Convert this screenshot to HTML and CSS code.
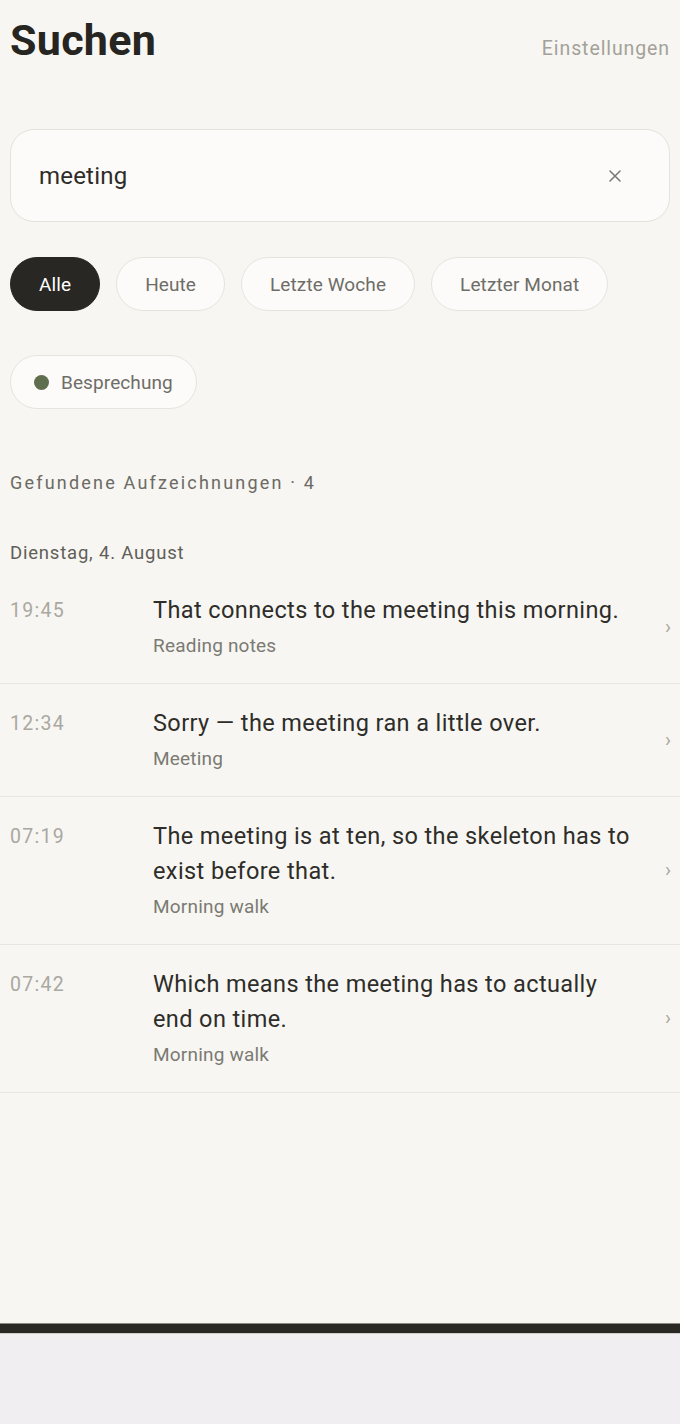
FILE: index.html
```html
<!DOCTYPE html>
<html lang="de">
<head>
<meta charset="utf-8">
<title>Suchen</title>
<link rel="stylesheet" href="styles.css">
</head>
<body>
<div class="app">
  <header class="header">
    <h1 class="title">Suchen</h1>
    <a class="settings">Einstellungen</a>
  </header>

  <div class="search">
    <span class="query">meeting</span>
    <svg class="clear" width="16" height="16" viewBox="0 0 16 16"><path d="M3 3 L13 13 M13 3 L3 13" stroke="#77766f" stroke-width="1.5" fill="none" stroke-linecap="round"/></svg>
  </div>

  <div class="chips">
    <span class="chip active">Alle</span>
    <span class="chip">Heute</span>
    <span class="chip">Letzte Woche</span>
    <span class="chip">Letzter Monat</span>
  </div>

  <div class="chips tags">
    <span class="chip tag"><span class="dot"></span>Besprechung</span>
  </div>

  <div class="count">Gefundene Aufzeichnungen · 4</div>

  <div class="day">Dienstag, 4. August</div>

  <ul class="results">
    <li class="row">
      <span class="time">19:45</span>
      <div class="body">
        <div class="text">That connects to the meeting this morning.</div>
        <div class="source">Reading notes</div>
      </div>
      <span class="chev">›</span>
    </li>
    <li class="row">
      <span class="time">12:34</span>
      <div class="body">
        <div class="text">Sorry — the meeting ran a little over.</div>
        <div class="source">Meeting</div>
      </div>
      <span class="chev">›</span>
    </li>
    <li class="row">
      <span class="time">07:19</span>
      <div class="body">
        <div class="text">The meeting is at ten, so the skeleton has to exist before that.</div>
        <div class="source">Morning walk</div>
      </div>
      <span class="chev">›</span>
    </li>
    <li class="row">
      <span class="time">07:42</span>
      <div class="body">
        <div class="text">Which means the meeting has to actually end on time.</div>
        <div class="source">Morning walk</div>
      </div>
      <span class="chev">›</span>
    </li>
  </ul>
</div>
<div class="bottombar"></div>
<div class="systemarea"></div>
</body>
</html>
```

FILE: styles.css
```css
* { box-sizing: border-box; }
html, body { margin: 0; padding: 0; }
body {
  background: #f0eef1;
  font-family: Roboto, "Liberation Sans", sans-serif;
  color: #2b2a26;
}
.app {
  background: #f7f6f2;
  height: 1323px;
  padding: 0 10px;
}
.header {
  display: flex;
  justify-content: space-between;
  align-items: baseline;
  padding-top: 14px;
}
.title {
  margin: 0;
  font-size: 43px;
  font-weight: 700;
  line-height: 52px;
  color: #262521;
  letter-spacing: 0.3px;
}
.settings {
  font-size: 19.5px;
  letter-spacing: 0.9px;
  color: #a3a199;
}
.search {
  margin-top: 63px;
  height: 93px;
  background: #fcfbf9;
  border: 1.5px solid #e4e2dc;
  border-radius: 24px;
  display: flex;
  align-items: center;
  justify-content: space-between;
  padding: 0 46px 0 28px;
}
.query {
  font-size: 24px;
  letter-spacing: 0.2px;
  color: #2d2c28;
}
.chips {
  display: flex;
  gap: 16px;
  margin-top: 35px;
}
.chip {
  height: 54px;
  display: inline-flex;
  align-items: center;
  padding: 0 28px;
  border-radius: 27px;
  background: #fcfbf9;
  border: 1.5px solid #e6e4de;
  font-size: 19px;
  letter-spacing: 0.1px;
  color: #6e6d67;
}
.chip.active {
  background: #282723;
  border-color: #282723;
  color: #ffffff;
}
.tags { margin-top: 44px; }
.tag { padding: 0 23px 0 23px; }
.dot {
  width: 15px;
  height: 15px;
  border-radius: 50%;
  background: #5f6e4f;
  margin-right: 12px;
}
.count {
  margin-top: 62px;
  font-size: 18px;
  letter-spacing: 2.2px;
  color: #6b6a64;
  line-height: 24px;
}
.day {
  margin-top: 46px;
  font-size: 18.5px;
  letter-spacing: 0.8px;
  color: #5f5e58;
  line-height: 24px;
}
.results {
  list-style: none;
  margin: 0 -10px;
  padding: 0;
  margin-top: 6px;
}
.row {
  display: flex;
  align-items: center;
  padding: 22px 10px 23px 10px;
  border-bottom: 1px solid #e8e6e1;
}
.time {
  align-self: flex-start;
  width: 143px;
  flex: none;
  font-size: 19.5px;
  letter-spacing: 1.3px;
  line-height: 35px;
  color: #a9a8a1;
}
.body { flex: 1; padding-right: 30px; }
.text {
  font-size: 23.5px;
  letter-spacing: 0.4px;
  line-height: 35px;
  color: #2e2d29;
}
.source {
  margin-top: 4px;
  font-size: 19px;
  letter-spacing: 0.2px;
  line-height: 28px;
  color: #7b7a73;
}
.chev {
  font-size: 20px;
  color: #a9a8a1;
  width: 8px;
  margin-right: -3px;
}
.bottombar {
  height: 11px;
  background: #292824;
  border-top: 1px solid #8a8984;
  border-bottom: 1px solid #cfcdcc;
}
.systemarea { height: 90px; background: #f0eef1; }
```
